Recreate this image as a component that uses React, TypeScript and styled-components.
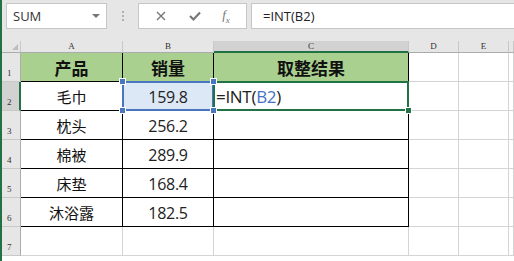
import { Fragment } from "react";
import styled, { createGlobalStyle } from "styled-components";

const GlobalStyle = createGlobalStyle`
    html, body {
        margin: 0;
        padding: 0;
        background: #ffffff;
        overflow: hidden;
    }
`;

const Page = styled.div`
    display: flex;
    width: 514px;
    height: 261px;
    overflow: hidden;
    font-family: "Noto Sans CJK SC", "Liberation Sans", sans-serif;
`;

const GreenEdge = styled.div`
    width: 2px;
    flex: none;
    background: #217346;
`;

const Main = styled.div`
    flex: 1;
    display: flex;
    flex-direction: column;
    min-width: 0;
`;

const Toolbar = styled.div`
    height: 41px;
    flex: none;
    background: #e6e6e6;
    display: flex;
    align-items: flex-start;
    padding-top: 3px;
    box-sizing: border-box;
`;

const NameBox = styled.div`
    margin-left: 4px;
    width: 101px;
    height: 26px;
    box-sizing: border-box;
    background: #fff;
    border: 1px solid #c6c6c6;
    display: flex;
    align-items: center;
    justify-content: space-between;
    padding: 0 6px 0 6px;
    font-family: "Open Sans", "Liberation Sans", sans-serif;
    font-size: 13px;
    color: #333;
`;

const Caret = styled.span`
    width: 0;
    height: 0;
    border-left: 4px solid transparent;
    border-right: 4px solid transparent;
    border-top: 4px solid #777;
`;

const Dots = styled.div`
    width: 31px;
    height: 26px;
    display: flex;
    flex-direction: column;
    align-items: center;
    justify-content: center;
    gap: 2px;
    span {
        width: 2px;
        height: 2px;
        background: #b0b0b0;
    }
`;

const IconBox = styled.div`
    width: 109px;
    height: 26px;
    box-sizing: border-box;
    background: #fff;
    border: 1px solid #c6c6c6;
    display: flex;
    align-items: center;
    justify-content: space-around;
    padding: 0 6px;
    color: #888;
`;

const Fx = styled.span`
    font-family: "Liberation Serif", serif;
    font-style: italic;
    font-size: 13px;
    color: #777;
    sub {
        font-size: 9px;
    }
`;

const FormulaBox = styled.div`
    margin-left: 4px;
    flex: 1;
    height: 26px;
    box-sizing: border-box;
    background: #fff;
    border: 1px solid #c6c6c6;
    border-right: none;
    display: flex;
    align-items: center;
    padding-left: 11px;
    font-family: "Open Sans", "Liberation Sans", sans-serif;
    font-size: 13px;
    color: #222;
`;

const Sheet = styled.div`
    display: grid;
    grid-template-columns: 19px 102px 91px 195px 50px 50px 5px;
    grid-template-rows: 12px repeat(7, 29px);
    background: #fff;
`;

const Corner = styled.div`
    background: #e6e6e6;
    border-right: 1px solid #c8c8c8;
    border-bottom: 1px solid #ababab;
    box-sizing: border-box;
    position: relative;
    &::after {
        content: "";
        position: absolute;
        right: 2px;
        bottom: 2px;
        border-left: 6px solid transparent;
        border-bottom: 6px solid #bdbdbd;
    }
`;

const ColHead = styled.div<{ $active?: boolean }>`
    background: ${(p) => (p.$active ? "#d2d2d2" : "#e6e6e6")};
    border-right: 1px solid #c8c8c8;
    border-bottom: ${(p) => (p.$active ? "2px solid #217346" : "1px solid #ababab")};
    box-sizing: border-box;
    display: flex;
    align-items: center;
    justify-content: center;
    font-family: "Liberation Serif", serif;
    font-size: 9px;
    color: #333;
    line-height: 1;
`;

const RowHead = styled.div<{ $active?: boolean }>`
    background: ${(p) => (p.$active ? "#d2d2d2" : "#e6e6e6")};
    border-right: ${(p) => (p.$active ? "2px solid #217346" : "1px solid #ababab")};
    border-bottom: 1px solid #c8c8c8;
    box-sizing: border-box;
    display: flex;
    align-items: flex-end;
    padding: 0 0 3px 5px;
    font-family: "Liberation Serif", serif;
    font-size: 9px;
    color: #333;
    line-height: 1;
`;

const Cell = styled.div<{ $table?: boolean; $head?: boolean; $fill?: string }>`
    position: relative;
    box-sizing: border-box;
    background: ${(p) => p.$fill || (p.$head ? "#a9d08e" : "#fff")};
    border-right: 1px solid ${(p) => (p.$table ? "#000" : "#d4d4d4")};
    border-bottom: 1px solid ${(p) => (p.$table ? "#000" : "#d4d4d4")};
    display: flex;
    align-items: center;
    justify-content: center;
    font-size: ${(p) => (p.$head ? "17px" : "15px")};
    font-weight: ${(p) => (p.$head ? 700 : 400)};
    color: #111;
    padding-top: 1px;
`;

const Num = styled.span`
    font-family: "Open Sans", "Liberation Sans", sans-serif;
    font-size: 16px;
    letter-spacing: -0.3px;
    color: #222;
`;

const FormulaCell = styled(Cell)`
    justify-content: flex-start;
    padding-left: 2px;
    font-family: "Open Sans", "Liberation Sans", sans-serif;
    font-size: 17px;
    letter-spacing: -0.3px;
    color: #222;
`;

const Ref = styled.span`
    color: #4472c4;
`;

const Outline = styled.div<{ $color: string }>`
    position: absolute;
    left: -1px;
    top: -1px;
    right: -1px;
    bottom: -1px;
    border: 2px solid ${(p) => p.$color};
    pointer-events: none;
`;

const Handle = styled.span<{ $color: string; $x: "l" | "r"; $y: "t" | "b" }>`
    position: absolute;
    width: 5px;
    height: 5px;
    background: ${(p) => p.$color};
    border: 1px solid #fff;
    ${(p) => (p.$x === "l" ? "left: -4px;" : "right: -4px;")}
    ${(p) => (p.$y === "t" ? "top: -4px;" : "bottom: -4px;")}
    z-index: 2;
`;

const rows = [
    { name: "毛巾", value: "159.8" },
    { name: "枕头", value: "256.2" },
    { name: "棉被", value: "289.9" },
    { name: "床垫", value: "168.4" },
    { name: "沐浴露", value: "182.5" },
];

const blue = "#4a76c0";
const green = "#217346";

export default function App() {
    return (
        <Page>
            <GlobalStyle />
            <GreenEdge />
            <Main>
                <Toolbar>
                    <NameBox>
                        SUM
                        <Caret />
                    </NameBox>
                    <Dots>
                        <span />
                        <span />
                        <span />
                    </Dots>
                    <IconBox>
                        <svg width="12" height="12" viewBox="0 0 12 12">
                            <path d="M2 2 L10 10 M10 2 L2 10" stroke="#777" strokeWidth="1.4" />
                        </svg>
                        <svg width="14" height="12" viewBox="0 0 14 12">
                            <path d="M2 6 L5.5 9.5 L12 2.5" stroke="#777" strokeWidth="2.2" fill="none" />
                        </svg>
                        <Fx>
                            f<sub>x</sub>
                        </Fx>
                    </IconBox>
                    <FormulaBox>=INT(B2)</FormulaBox>
                </Toolbar>
                <Sheet>
                    <Corner />
                    <ColHead>A</ColHead>
                    <ColHead>B</ColHead>
                    <ColHead $active>C</ColHead>
                    <ColHead>D</ColHead>
                    <ColHead>E</ColHead>
                    <ColHead />

                    <RowHead>1</RowHead>
                    <Cell $table $head>产品</Cell>
                    <Cell $table $head>销量</Cell>
                    <Cell $table $head>取整结果</Cell>
                    <Cell />
                    <Cell />
                    <Cell />

                    {rows.map((r, i) => (
                        <Fragment key={r.name}>
                            <RowHead $active={i === 0}>{i + 2}</RowHead>
                            <Cell $table>{r.name}</Cell>
                            <Cell $table $fill={i === 0 ? "#dde8f6" : undefined}>
                                <Num>{r.value}</Num>
                                {i === 0 && (
                                    <>
                                        <Outline $color={blue} />
                                        <Handle $color={blue} $x="l" $y="t" />
                                        <Handle $color={blue} $x="r" $y="t" />
                                        <Handle $color={blue} $x="l" $y="b" />
                                        <Handle $color={blue} $x="r" $y="b" />
                                    </>
                                )}
                            </Cell>
                            {i === 0 ? (
                                <FormulaCell $table>
                                    =INT(<Ref>B2</Ref>)
                                    <Outline $color={green} />
                                    <Handle $color={green} $x="r" $y="b" />
                                </FormulaCell>
                            ) : (
                                <Cell $table />
                            )}
                            <Cell />
                            <Cell />
                            <Cell />
                        </Fragment>
                    ))}

                    <RowHead>7</RowHead>
                    <Cell />
                    <Cell />
                    <Cell />
                    <Cell />
                    <Cell />
                    <Cell />
                </Sheet>
            </Main>
        </Page>
    );
}
